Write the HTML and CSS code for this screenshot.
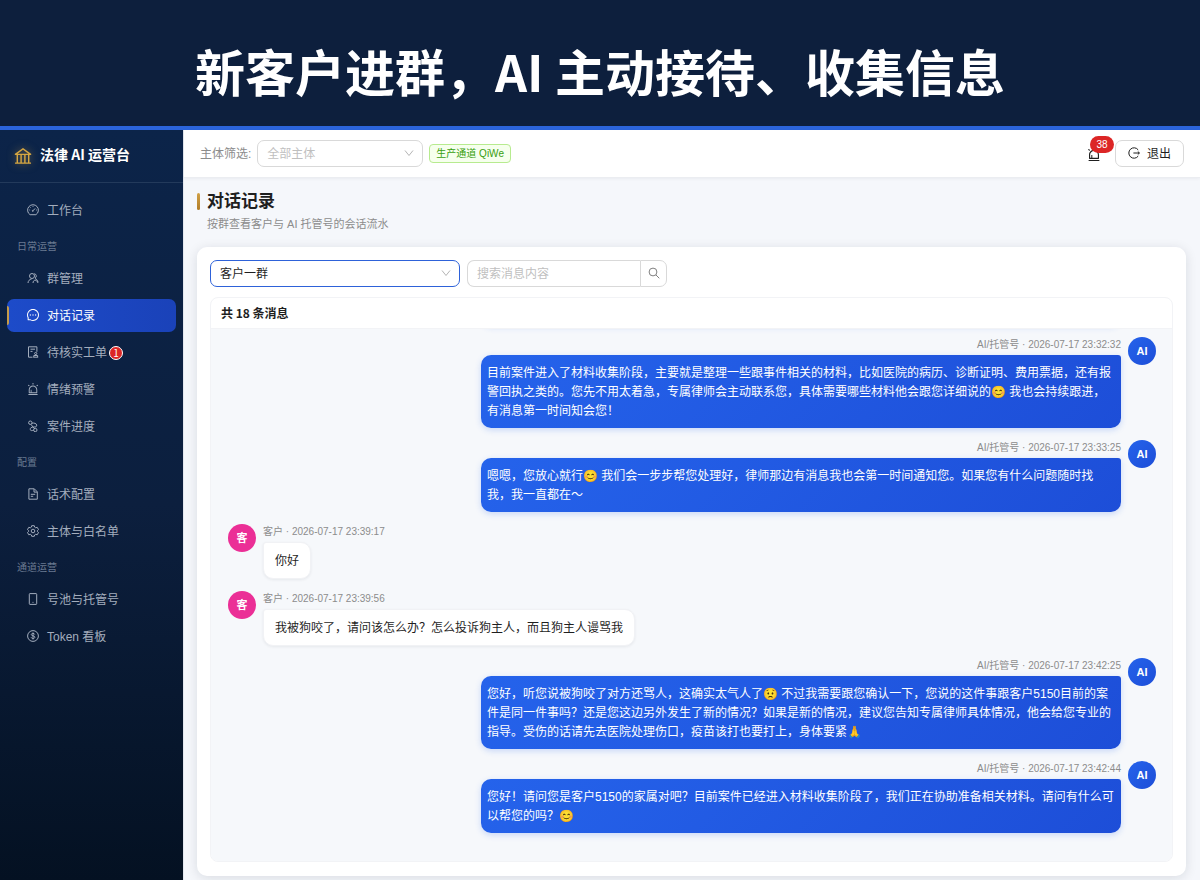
FILE: index.html
```html
<!DOCTYPE html>
<html lang="zh-CN">
<head>
<meta charset="utf-8">
<meta name="viewport" content="width=device-width, initial-scale=1">
<title>法律 AI 运营台</title>
<link rel="stylesheet" href="styles.css">
</head>
<body>
<svg class="sprite" aria-hidden="true">
  <symbol id="i-alert" viewBox="64 64 896 896"><path fill="currentColor" d="M193 796c0 17.7 14.3 32 32 32h574c17.7 0 32-14.3 32-32V563c0-176.2-142.8-319-319-319S193 386.8 193 563v233zm72-233c0-136.4 110.6-247 247-247s247 110.6 247 247v193H404V585c0-5.500-4.500-10-10-10h-44c-5.500 0-10 4.500-10 10v171h-75V563zm-48.100-252.500l39.600-39.600c3.100-3.100 3.100-8.200 0-11.300l-67.900-67.900a8.030 8.030 0 0 0-11.300 0l-39.600 39.600a8.030 8.030 0 0 0 0 11.300l67.900 67.900c3.100 3.100 8.100 3.100 11.300 0zm669.600-79.200l-39.600-39.600a8.030 8.030 0 0 0-11.300 0l-67.900 67.900a8.030 8.030 0 0 0 0 11.300l39.600 39.600c3.100 3.100 8.200 3.100 11.300 0l67.900-67.900c3.100-3.200 3.100-8.200 0-11.300zM832 892H192c-17.700 0-32 14.300-32 32v24c0 4.400 3.600 8 8 8h688c4.400 0 8-3.600 8-8v-24c0-17.700-14.300-32-32-32zM484 180h56c4.400 0 8-3.600 8-8V76c0-4.400-3.600-8-8-8h-56c-4.400 0-8 3.600-8 8v96c0 4.400 3.600 8 8 8z"/></symbol>
  <symbol id="i-down" viewBox="0 0 10 10"><path fill="none" stroke="currentColor" d="M1 2.500 5 7.500 9 2.500"/></symbol>
</svg>

<header class="banner"><h1 class="banner-title">新客户进群，AI 主动接待、收集信息</h1></header>

<div class="app">
  <aside class="sidebar">
    <div class="brand">
      <svg class="brand-icon" viewBox="64 64 896 896" aria-hidden="true"><path fill="currentColor" d="M894 462c30.9 0 43.8-39.7 18.7-58L530.8 126.2a31.81 31.81 0 0 0-37.6 0L111.3 404c-25.1 18.2-12.2 58 18.8 58H192v374h-72c-4.4 0-8 3.6-8 8v52c0 4.4 3.6 8 8 8h784c4.400 0 8-3.600 8-8v-52c0-4.400-3.600-8-8-8h-72V462h62zM512 196.700l271.100 197.200H240.900L512 196.700zM264 462h117v374H264V462zm189 0h117v374H453V462zm307 374H642V462h118v374z"/></svg>
      <span>法律 AI 运营台</span>
    </div>
    <nav class="menu">
      <a class="item" href="#"><svg class="icon" viewBox="0 0 12 12"><path d="M3.100 10.700a5.400 5.400 0 1 1 5.800 0zM6 6.700 8.200 4.400M6 2.200v.8M2.300 6h.8M9 6h.8M3.300 3.400l.6.600"/><circle cx="5.800" cy="6.900" r=".5"/></svg>工作台</a>
      <h2 class="group">日常运营</h2>
      <a class="item" href="#"><svg class="icon" viewBox="0 0 12 12"><circle cx="5" cy="4" r="2.500"/><path d="M1 11c.2-2.300 1.500-3.600 3.600-4M7.200 1.700a2.400 2.400 0 0 1 .8 4.500M6 11c.2-1.800.8-2.800 2-2.800s2.500 1 3 2.800M8 6.500c1.500.5 2.600 1.700 3 3.500"/></svg>群管理</a>
      <a class="item active" href="#" aria-current="page"><svg class="icon" viewBox="64 64 896 896"><path class="solid" d="M464 512a48 48 0 1 0 96 0 48 48 0 1 0-96 0zm200 0a48 48 0 1 0 96 0 48 48 0 1 0-96 0zm-400 0a48 48 0 1 0 96 0 48 48 0 1 0-96 0zm661.2-173.6c-22.6-53.7-55-101.9-96.3-143.3a444.35 444.35 0 0 0-143.3-96.3C630.6 75.7 572.2 64 512 64h-2c-60.6.3-119.3 12.3-174.5 35.9a445.35 445.35 0 0 0-142 96.5c-40.9 41.3-73 89.3-95.2 142.8-23 55.4-34.6 114.3-34.3 174.9A449.4 449.4 0 0 0 112 714v152a46 46 0 0 0 46 46h152.1A449.4 449.4 0 0 0 510 960h2.1c59.9 0 118-11.6 172.7-34.3a444.48 444.48 0 0 0 142.8-95.2c41.3-40.9 73.8-88.7 96.5-142 23.6-55.2 35.6-113.9 35.9-174.5.3-60.9-11.5-120-34.8-175.6zm-151.1 438C704 845.8 611 884 512 884h-1.7c-60.3-.3-120.2-15.3-173.1-43.5l-8.4-4.5H188V695.2l-4.500-8.400C155.300 633.900 140.300 574 140 513.700c-.4-99.700 37.700-193.300 107.600-263.800 69.800-70.500 163.100-109.500 262.800-109.900h1.700c50 0 98.500 9.700 144.200 28.900 44.600 18.700 84.600 45.600 119 80 34.300 34.300 61.300 74.400 80 119 19.400 46.200 29.100 95.200 28.900 145.800-.6 99.600-39.700 192.900-110.100 262.700z"/></svg>对话记录</a>
      <a class="item" href="#"><svg class="icon" viewBox="0 0 12 12"><path d="M5.500 11.200H1.500V.8h8.400v5M3.500 3.200h4.500M3.500 5.400h2M6.200 11.200h5M6.800 11v-1.500h3.800V11M8.700 9.500v-1"/><circle cx="8.700" cy="7.500" r="1.100"/></svg>待核实工单<span class="count">1</span></a>
      <a class="item" href="#"><svg class="icon"><use href="#i-alert"/></svg>情绪预警</a>
      <a class="item" href="#"><svg class="icon" viewBox="0 0 12 12"><circle cx="3.300" cy="2.700" r="1.700"/><path d="M4.900 3.200c2-.5 4.800.2 4.800 2S8.600 7 6.500 7s-3.600 1-3.200 2.600S5 10.400 6.400 10.400M3.900 4.300 7.600 8.900"/><circle cx="8.300" cy="10" r="1.700"/></svg>案件进度</a>
      <h2 class="group">配置</h2>
      <a class="item" href="#"><svg class="icon" viewBox="0 0 12 12"><path d="M1.900.8h5.400l3 3v7.400H1.900zM7 1v3.100h3.100M3.800 6.300h4.400M3.800 8.300h2.400"/></svg>话术配置</a>
      <a class="item" href="#"><svg class="icon" viewBox="0 0 12 12"><path d="M4.700.7h2.600l.4 1.500 1 .6 1.500-.5 1.300 2.300-1.100 1v.9l1.100 1-1.300 2.300-1.500-.5-1 .6-.4 1.400H4.700l-.4-1.400-1-.6-1.500.5L.5 7.500l1.100-1v-.9l-1.100-1 1.300-2.300 1.500.5 1-.6z"/><circle cx="6" cy="6" r="1.800"/></svg>主体与白名单</a>
      <h2 class="group">通道运营</h2>
      <a class="item" href="#"><svg class="icon" viewBox="0 0 12 12"><rect x="2.300" y=".6" width="7.400" height="10.800" rx=".7"/><circle cx="6" cy="9.300" r=".2"/></svg>号池与托管号</a>
      <a class="item" href="#"><svg class="icon" viewBox="0 0 12 12"><circle cx="6" cy="6" r="5.400"/><path d="M7.700 4.500C7.500 3.700 6.900 3.400 6 3.400c-1 0-1.700.4-1.700 1.200C4.300 6.300 7.800 5.300 7.800 7.200c0 .9-.8 1.300-1.800 1.300S4.300 8.100 4.200 7.200M6 2.500v7"/></svg>Token 看板</a>
    </nav>
  </aside>

  <div class="main">
    <div class="topbar">
      <label class="filter-label" for="subject">主体筛选:</label>
      <span class="select subject"><select id="subject" class="muted"><option>全部主体</option></select><svg class="arrow"><use href="#i-down"/></svg></span>
      <span class="tag">生产通道 QiWe</span>
      <button class="bell" type="button" aria-label="预警"><svg class="bell-icon"><use href="#i-alert"/></svg><span class="bell-count">38</span></button>
      <button class="logout" type="button"><svg class="icon" viewBox="0 0 12 12"><path d="M10.200 2.900a5.200 5.200 0 1 0 0 6.200M5.400 6h6M9.800 4.500 11.400 6 9.800 7.500"/></svg>退出</button>
    </div>

    <main class="content">
      <div class="heading">
        <h2 class="title">对话记录</h2>
        <p class="subtitle">按群查看客户与 AI 托管号的会话流水</p>
      </div>

      <section class="card">
        <div class="tools">
          <span class="select room"><select aria-label="客户群"><option>客户一群</option></select><svg class="arrow"><use href="#i-down"/></svg></span>
          <form class="search">
            <input type="text" placeholder="搜索消息内容" aria-label="搜索消息内容">
            <button type="button" aria-label="搜索"><svg class="icon" viewBox="0 0 12 12"><circle cx="5" cy="5" r="3.900"/><path d="m7.900 7.900 3.400 3.400"/></svg></button>
          </form>
        </div>

        <div class="panel">
          <h3 class="panel-title">共 18 条消息</h3>
          <div class="chat">
            <div class="msg ai"><div class="body"><div class="bubble earlier"></div></div><span class="spacer"></span></div>
            <div class="msg ai"><div class="body"><div class="meta">AI/托管号 · 2026-07-17 23:32:32</div><div class="bubble">目前案件进入了材料收集阶段，主要就是整理一些跟事件相关的材料，比如医院的病历、诊断证明、费用票据，还有报警回执之类的。您先不用太着急，专属律师会主动联系您，具体需要哪些材料他会跟您详细说的😊 我也会持续跟进，有消息第一时间知会您！</div></div><span class="avatar">AI</span></div>
            <div class="msg ai"><div class="body"><div class="meta">AI/托管号 · 2026-07-17 23:33:25</div><div class="bubble">嗯嗯，您放心就行😊 我们会一步步帮您处理好，律师那边有消息我也会第一时间通知您。如果您有什么问题随时找我，我一直都在～</div></div><span class="avatar">AI</span></div>
            <div class="msg"><span class="avatar">客</span><div class="body"><div class="meta">客户 · 2026-07-17 23:39:17</div><div class="bubble">你好</div></div></div>
            <div class="msg"><span class="avatar">客</span><div class="body"><div class="meta">客户 · 2026-07-17 23:39:56</div><div class="bubble">我被狗咬了，请问该怎么办？怎么投诉狗主人，而且狗主人谩骂我</div></div></div>
            <div class="msg ai"><div class="body"><div class="meta">AI/托管号 · 2026-07-17 23:42:25</div><div class="bubble">您好，听您说被狗咬了对方还骂人，这确实太气人了😟 不过我需要跟您确认一下，您说的这件事跟客户5150目前的案件是同一件事吗？还是您这边另外发生了新的情况？如果是新的情况，建议您告知专属律师具体情况，他会给您专业的指导。受伤的话请先去医院处理伤口，疫苗该打也要打上，身体要紧🙏</div></div><span class="avatar">AI</span></div>
            <div class="msg ai"><div class="body"><div class="meta">AI/托管号 · 2026-07-17 23:42:44</div><div class="bubble">您好！请问您是客户5150的家属对吧？目前案件已经进入材料收集阶段了，我们正在协助准备相关材料。请问有什么可以帮您的吗？😊</div></div><span class="avatar">AI</span></div>
          </div>
        </div>
      </section>
    </main>
  </div>
</div>
</body>
</html>
```

FILE: styles.css
```css
* { box-sizing: border-box; }

body {
  margin: 0;
  height: 100vh;
  display: flex;
  flex-direction: column;
  overflow: hidden;
  font: 12px/19px "Liberation Sans", "Noto Sans CJK SC", sans-serif;
  color: #1f1f1f;
  background: #f5f7fb;
}

h1, h2, h3, p { margin: 0; }
button, input, select { font: inherit; color: inherit; }
.sprite { display: none; }

.banner {
  flex: none;
  padding: 33px 16px 18px;
  background: #0d1f3d;
  border-bottom: 4px solid #2b64db;
  text-align: center;
}
.banner-title {
  font: bold 50px/75px "Noto Sans CJK SC", sans-serif;
  color: #fff;
}

.app { flex: 1; display: flex; min-height: 0; }

/* Sidebar */
.sidebar {
  flex: none;
  width: 184px;
  border-right: 1px solid #e3e7ee;
  background: linear-gradient(180deg, #0c2449 0%, #0c1f3e 50%, #041122 100%);
  background-clip: padding-box;
}
.brand {
  display: flex;
  align-items: center;
  gap: 8px;
  height: 53px;
  padding: 0 14px 4px;
  border-bottom: 1px solid #233a5b;
  font: bold 14px/20px "Noto Sans CJK SC", sans-serif;
  color: #fff;
}
.brand-icon {
  width: 18px;
  height: 18px;
  margin-top: 3px;
  color: #d5a642;
  filter: drop-shadow(0 0 4px rgba(213, 166, 66, .5));
}
.menu { padding: 11px 7px; }
.item {
  position: relative;
  display: flex;
  align-items: center;
  height: 33px;
  margin-bottom: 4px;
  padding: 1px 0 0 20px;
  border-radius: 7px;
  color: #a3adbd;
  text-decoration: none;
}
.item .icon { margin: 0 8px 3px 0; }
.item:has(+ .group) { margin-bottom: 0; }
.item.active {
  background: linear-gradient(90deg, #1d4bc9, #1a42b9);
  color: #fff;
}
.item.active::before {
  content: "";
  position: absolute;
  left: 0;
  top: 7px;
  bottom: 7px;
  width: 2px;
  border-radius: 0 2px 2px 0;
  background: #c59b4a;
}
.icon {
  flex: none;
  width: 12px;
  height: 12px;
  fill: none;
  stroke: currentColor;
}
.icon .solid { fill: currentColor; stroke: none; }
.icon use { stroke: none; }
.group {
  padding: 12px 10px 8px;
  font-size: 10px;
  line-height: 15px;
  font-weight: normal;
  color: #6a7a91;
}
.count {
  width: 14px;
  height: 14px;
  margin-left: 2px;
  border: 1px solid #fff;
  border-radius: 7px;
  background: #dc2626;
  font: 10px/12px "Noto Sans CJK SC", sans-serif;
  text-align: center;
  color: #fff;
}

/* Top bar */
.main { flex: 1; min-width: 0; display: flex; flex-direction: column; }
.topbar {
  position: relative;
  flex: none;
  display: flex;
  align-items: center;
  gap: 6px;
  height: 48px;
  padding: 0 16px;
  background: #fff;
  border-bottom: 1px solid #ebedf1;
  box-shadow: 0 1px 3px rgba(15, 23, 42, .05);
}
.filter-label { padding-top: 1px; color: #8c8c8c; }
.select { position: relative; display: block; }
.select select {
  display: block;
  width: 100%;
  height: 27px;
  padding: 2px 9px 0;
  border: 1px solid #d9d9d9;
  border-radius: 7px;
  background: #fff;
  appearance: none;
}
.select .muted { color: #bfbfbf; }
.arrow {
  position: absolute;
  right: 9px;
  top: 8px;
  width: 10px;
  height: 10px;
  color: #b5b5b5;
  pointer-events: none;
}
.subject { width: 166px; }
.tag {
  padding: 1px 6px 0;
  border: 1px solid #b7eb8f;
  border-radius: 4px;
  background: #f6ffed;
  font-size: 10px;
  line-height: 16px;
  color: #389e0d;
}
.bell {
  position: relative;
  margin-left: auto;
  padding: 0;
  border: 0;
  background: none;
  width: 14px;
  height: 14px;
}
.bell-icon { display: block; width: 14px; height: 14px; }
.bell-count {
  position: absolute;
  left: 3px;
  top: -11px;
  width: 24px;
  border-radius: 9px;
  background: #dc2626;
  font-size: 10px;
  line-height: 17px;
  text-align: center;
  color: #fff;
}
.logout {
  display: flex;
  align-items: center;
  gap: 7px;
  height: 27px;
  margin-left: 8px;
  padding: 1px 12px 0;
  border: 1px solid #d9d9d9;
  border-radius: 7px;
  background: #fff;
}
.logout .icon { margin-bottom: 2px; }

/* Content */
.content {
  flex: 1;
  min-height: 0;
  display: flex;
  flex-direction: column;
  padding: 11px 14px 4px 13px;
}
.heading {
  position: relative;
  padding: 0 0 14px 10px;
}
.heading::before {
  content: "";
  position: absolute;
  left: 0;
  top: 4px;
  width: 3px;
  height: 17px;
  border-radius: 2px;
  background: linear-gradient(#d1a146, #b07c28);
}
.title { font: bold 17px/22px "Noto Sans CJK SC", sans-serif; }
.subtitle {
  margin-top: 4px;
  font-size: 11px;
  line-height: 18px;
  color: #8c8c8c;
}
.card {
  flex: 1;
  min-height: 0;
  display: flex;
  flex-direction: column;
  gap: 10px;
  padding: 13px 13px 14px;
  border-radius: 10px;
  background: #fff;
  box-shadow: 0 2px 12px rgba(15, 23, 42, .12);
}
.tools { display: flex; gap: 7px; }
.room { width: 250px; }
.room select { border-color: #2e62d9; }
.search { display: flex; width: 200px; }
.search input {
  flex: 1;
  min-width: 0;
  height: 27px;
  padding: 0 9px;
  border: 1px solid #d9d9d9;
  border-right: 0;
  border-radius: 7px 0 0 7px;
}
.search input::placeholder { color: #bfbfbf; }
.search button {
  display: grid;
  place-items: center;
  width: 27px;
  padding: 0 0 2px;
  border: 1px solid #d9d9d9;
  border-radius: 0 7px 7px 0;
  background: #fff;
  color: #808080;
}
.panel {
  flex: 1;
  min-height: 0;
  display: flex;
  flex-direction: column;
  overflow: hidden;
  border: 1px solid #f2f3f6;
  border-radius: 8px;
}
.panel-title {
  padding: 5px 10px 6px;
  border-bottom: 1px solid #f2f3f6;
  font: bold 12px/19px "Noto Sans CJK SC", sans-serif;
}

/* Messages */
.chat {
  flex: 1;
  min-height: 0;
  display: flex;
  flex-direction: column;
  justify-content: flex-end;
  gap: 12px;
  overflow: hidden;
  padding: 0 16px 28px 17px;
  background: #f6f8fb;
}
.msg { flex: none; display: flex; gap: 7px; }
.msg.ai { justify-content: flex-end; }
.avatar {
  flex: none;
  width: 28px;
  height: 28px;
  border-radius: 50%;
  background: #eb2f96;
  font-size: 11px;
  font-weight: bold;
  line-height: 28px;
  text-align: center;
  color: #fff;
}
.spacer { width: 28px; }
.ai .avatar { background: linear-gradient(135deg, #2563eb, #1d4ed8); }
.body {
  display: flex;
  flex-direction: column;
  align-items: flex-start;
  max-width: 640px;
}
.ai .body { align-items: flex-end; }
.meta {
  margin-bottom: 3px;
  font-size: 10px;
  line-height: 15px;
  color: #8c8c8c;
}
.bubble {
  padding: 9px 11px 7px;
  border: 1px solid #f1f2f5;
  border-radius: 3px 10px 10px 10px;
  background: #fff;
  box-shadow: 0 1px 3px rgba(15, 23, 42, .07);
}
.ai .bubble {
  padding: 9px 6px 7px;
  border: 0;
  border-radius: 10px 3px 10px 10px;
  background: linear-gradient(135deg, #2563eb, #1d4ed8);
  box-shadow: 0 2px 6px rgba(37, 99, 235, .22);
  color: #fff;
}
.ai .earlier { width: 640px; height: 35px; }
```
